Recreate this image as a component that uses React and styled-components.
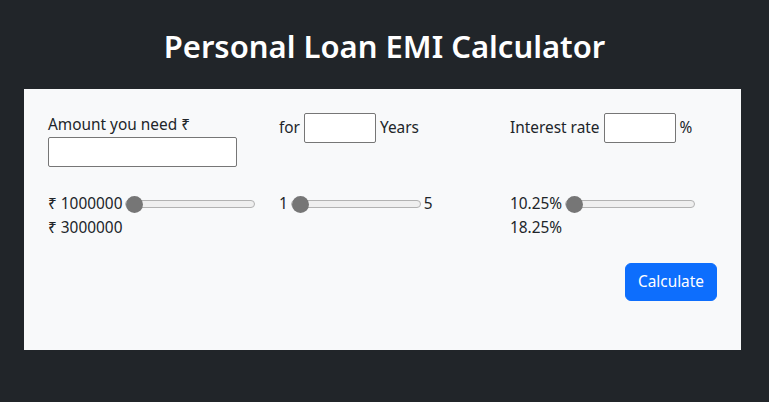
import React from "react";
import styled, { createGlobalStyle } from "styled-components";

const GlobalStyle = createGlobalStyle`
  html, body { margin: 0; padding: 0; }
  body {
    background: #212529;
    font-family: "Noto Sans", "DejaVu Sans", sans-serif;
    font-size: 15.4px;
    line-height: 24px;
    color: #212529;
  }
  * { box-sizing: border-box; }
`;

const Page = styled.div`
  width: 769px;
  min-height: 402px;
  padding-top: 27px;
`;

const Title = styled.h1`
  margin: 0 0 24px;
  text-align: center;
  color: #fff;
  font-size: 31px;
  font-weight: 600;
  line-height: 38px;
`;

const Panel = styled.div`
  margin: 0 28px 0 24px;
  background: #f8f9fa;
  padding: 24px 24px 49px;
`;

const Grid = styled.div`
  display: grid;
  grid-template-columns: repeat(3, minmax(0, 1fr));
  align-items: start;
  margin-right: -24px;
`;

const Col = styled.div`
  display: flex;
  flex-direction: ${(p) => (p.$stack ? "column" : "row")};
  align-items: ${(p) => (p.$stack ? "flex-start" : "center")};
  gap: ${(p) => (p.$stack ? "0" : "4px")};
`;

const TextInput = styled.input`
  width: ${(p) => p.$w}px;
  height: 30px;
  border: 1px solid #767676;
  border-radius: 2px;
  background: #fff;
  font: inherit;
  padding: 1px 2px;
`;

const SliderRow = styled.div`
  display: flex;
  flex-wrap: wrap;
  align-items: center;
  align-content: flex-start;
  column-gap: 3px;
  margin-top: 25px;
`;

const Range = styled.input`
  -webkit-appearance: none;
  appearance: none;
  width: 130px;
  height: 18px;
  margin: 0;
  background: transparent;
  &::-webkit-slider-runnable-track {
    height: 8px;
    background: #efefef;
    border: 1px solid #b2b2b2;
    border-radius: 4px;
  }
  &::-webkit-slider-thumb {
    -webkit-appearance: none;
    appearance: none;
    width: 17px;
    height: 17px;
    border-radius: 50%;
    background: #767676;
    margin-top: -5.5px;
    border: none;
  }
`;

const Actions = styled.div`
  display: flex;
  justify-content: flex-end;
  margin-top: 23px;
`;

const Button = styled.button`
  background: #0d6efd;
  color: #fff;
  border: 1px solid #0d6efd;
  border-radius: 6px;
  padding: 6px 12px;
  font: inherit;
  font-size: 15.4px;
  line-height: 24px;
  cursor: pointer;
`;

function Slider({ min, max, minLabel, maxLabel }) {
  return (
    <SliderRow>
      <span>{minLabel}</span>
      <Range type="range" min={min} max={max} defaultValue={min} />
      <span>{maxLabel}</span>
    </SliderRow>
  );
}

export default function App() {
  return (
    <>
      <GlobalStyle />
      <Page>
        <Title>Personal Loan EMI Calculator</Title>
        <Panel>
          <Grid>
            <Col $stack>
              <span>Amount you need ₹</span>
              <TextInput $w={189} />
            </Col>
            <Col>
              <span>for</span>
              <TextInput $w={72} />
              <span>Years</span>
            </Col>
            <Col>
              <span>Interest rate</span>
              <TextInput $w={72} />
              <span>%</span>
            </Col>
            <Slider min={1000000} max={3000000} minLabel="₹ 1000000" maxLabel="₹ 3000000" />
            <Slider min={1} max={5} minLabel="1" maxLabel="5" />
            <Slider min={10.25} max={18.25} minLabel="10.25%" maxLabel="18.25%" />
          </Grid>
          <Actions>
            <Button>Calculate</Button>
          </Actions>
        </Panel>
      </Page>
    </>
  );
}
